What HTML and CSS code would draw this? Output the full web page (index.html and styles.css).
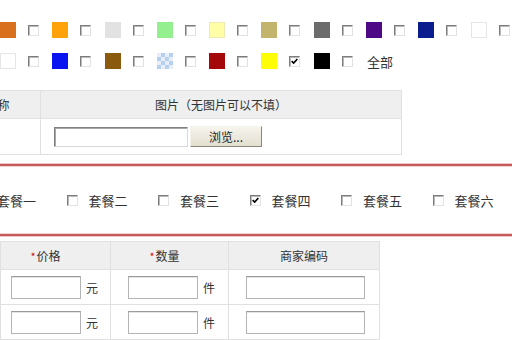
FILE: index.html
```html
<!DOCTYPE html>
<html lang="zh-CN">
   <head>
      <meta charset="UTF-8">
      <meta name="viewport" content="width=device-width, initial-scale=1.0">
      <title>商品规格</title>
      <link rel="stylesheet" href="styles.css">
   </head>
   <body>
      <div class="page">
         <div class="colors">
            <div class="color-row">
               <span class="swatch c-chocolate"></span><span class="cb"></span>
               <span class="swatch c-orange"></span><span class="cb"></span>
               <span class="swatch c-silver"></span><span class="cb"></span>
               <span class="swatch c-green"></span><span class="cb"></span>
               <span class="swatch c-cream"></span><span class="cb"></span>
               <span class="swatch c-khaki"></span><span class="cb"></span>
               <span class="swatch c-gray"></span><span class="cb"></span>
               <span class="swatch c-purple"></span><span class="cb"></span>
               <span class="swatch c-navy"></span><span class="cb"></span>
               <span class="swatch c-white"></span><span class="cb"></span>
            </div>
            <div class="color-row second">
               <span class="swatch c-white"></span><span class="cb"></span>
               <span class="swatch c-blue"></span><span class="cb"></span>
               <span class="swatch c-brown"></span><span class="cb"></span>
               <span class="swatch c-pattern"></span><span class="cb"></span>
               <span class="swatch c-red"></span><span class="cb"></span>
               <span class="swatch c-yellow"></span><span class="cb checked"><svg viewBox="0 0 11 11"><path d="M2 5 L4.5 7.5 L9 2.5" fill="none" stroke="#000" stroke-width="2"/></svg></span>
               <span class="swatch c-black"></span><span class="cb"></span>
               <span class="all-label">全部</span>
            </div>
         </div>

         <table class="pic-table">
            <colgroup><col class="w-name"><col class="w-pic"></colgroup>
            <tr class="head">
               <td>名称</td>
               <td>图片（无图片可以不填）</td>
            </tr>
            <tr class="body-row">
               <td></td>
               <td class="file-cell">
                  <div class="file-box">
                     <span class="file-input"></span>
                     <span class="browse-btn">浏览...</span>
                  </div>
               </td>
            </tr>
         </table>

         <div class="meal-box">
            <div class="meal-row">
               <span class="meal"><span class="cb"></span><span class="meal-text">套餐一</span></span>
               <span class="meal"><span class="cb"></span><span class="meal-text">套餐二</span></span>
               <span class="meal"><span class="cb"></span><span class="meal-text">套餐三</span></span>
               <span class="meal"><span class="cb checked"><svg viewBox="0 0 11 11"><path d="M2 5 L4.5 7.5 L9 2.5" fill="none" stroke="#000" stroke-width="2"/></svg></span><span class="meal-text">套餐四</span></span>
               <span class="meal"><span class="cb"></span><span class="meal-text">套餐五</span></span>
               <span class="meal"><span class="cb"></span><span class="meal-text">套餐六</span></span>
            </div>
         </div>

         <table class="sku-table">
            <colgroup><col class="w1"><col class="w2"><col class="w3"><col class="w4"></colgroup>
            <tr class="head">
               <td></td>
               <td class="shift-big"><span class="star">*</span>价格</td>
               <td class="shift-small"><span class="star">*</span>数量</td>
               <td>商家编码</td>
            </tr>
            <tr class="sku-row">
               <td></td>
               <td class="pad-a"><span class="text-input short"></span><span class="unit">元</span></td>
               <td class="pad-b"><span class="text-input short"></span><span class="unit">件</span></td>
               <td class="pad-b"><span class="text-input long"></span></td>
            </tr>
            <tr class="sku-row">
               <td></td>
               <td class="pad-a"><span class="text-input short"></span><span class="unit">元</span></td>
               <td class="pad-b"><span class="text-input short"></span><span class="unit">件</span></td>
               <td class="pad-b"><span class="text-input long"></span></td>
            </tr>
         </table>
      </div>
   </body>
</html>
```

FILE: styles.css
```css
body{
margin: 0;
background: #fff;
overflow: hidden;
font-family: "Noto Sans CJK SC", "Liberation Sans", sans-serif;
font-size: 12px;
color: #333;
}
.page{
width: 512px;
height: 340px;
overflow: hidden;
}
.colors{
padding-top: 22px;
}
.color-row{
display: flex;
align-items: center;
height: 16px;
}
.color-row.second{
margin-top: 15px;
}
.swatch{
flex: none;
width: 16px;
height: 16px;
margin-right: 12px;
box-sizing: border-box;
}
.cb{
flex: none;
display: inline-block;
width: 11px;
height: 11px;
box-sizing: border-box;
border: 1px solid;
border-color: #7c7c7c #e2e2e2 #e2e2e2 #7c7c7c;
box-shadow: inset 1px 1px 0 #b8b8b8;
background: #fff;
position: relative;
}
.color-row .cb{
margin-right: 13.3px;
}
.cb svg{
position: absolute;
left: 0;
top: 0;
width: 9px;
height: 9px;
}
.c-chocolate{ background: #d8701e; }
.c-orange{ background: #ffa20a; }
.c-silver{ background: #e2e2e2; }
.c-green{ background: #94f08e; }
.c-cream{ background: #fffea6; border: 1px solid #eeeab0; }
.c-khaki{ background: #c2b46c; }
.c-gray{ background: #6c6c6c; }
.c-purple{ background: #4e0a86; }
.c-navy{ background: #0a1c8e; }
.c-white{ background: #fff; border: 1px solid #e6e6e6; }
.c-blue{ background: #0a14f0; }
.c-brown{ background: #8a5a0e; }
.c-pattern{ background: repeating-conic-gradient(#b8d0f0 0 25%, #e8eef8 0 50%); background-size: 8px 8px; }
.c-red{ background: #a40808; }
.c-yellow{ background: #fdfd08; }
.c-black{ background: #000; }
.all-label{
font-size: 13px;
color: #333;
margin-left: 1px;
}

.pic-table{
margin-top: 21px;
margin-left: -46px;
width: 447px;
table-layout: fixed;
border-collapse: collapse;
}
.w-name{ width: 86px; }
.w-pic{ width: 361px; }
.pic-table td{
border: 1px solid #e0e0e0;
padding: 0;
}
.head td{
background: #efefef;
height: 27px;
text-align: center;
}
.body-row td{
height: 35px;
}
.pic-table .file-cell{
padding-left: 13px;
}
.file-box{
display: flex;
align-items: center;
}
.file-input{
width: 134px;
height: 20px;
box-sizing: border-box;
border: 1px solid;
border-color: #808080 #d8d8d8 #d8d8d8 #808080;
box-shadow: inset 1px 1px 0 #a8a8a8;
background: #fff;
}
.browse-btn{
width: 72px;
height: 21px;
margin-left: 2px;
box-sizing: border-box;
border: 1px solid;
border-color: #f4f2ea #8a8878 #8a8878 #f4f2ea;
background: linear-gradient(#f6f4ec, #e2dfd0);
font-size: 12px;
line-height: 19px;
text-align: center;
color: #222;
}

.meal-box{
margin-top: 9px;
margin-left: -10px;
width: 540px;
height: 68px;
border-top: 2px solid #c45a5a;
border-bottom: 2px solid #c45a5a;
box-shadow: 0 -1px 0 #f0c4c4, 0 1px 0 #f0c4c4, inset 0 1px 0 #f4d4d4, inset 0 -1px 0 #f4d4d4;
display: flex;
align-items: center;
}
.meal-row{
display: flex;
align-items: center;
margin-left: -15px;
}
.meal{
display: flex;
align-items: center;
margin-right: 30.5px;
}
.meal .cb{
margin-right: 11px;
}
.meal-text{
width: 39px;
font-size: 13px;
color: #333;
}

.sku-table{
margin-top: 5px;
margin-left: -50px;
width: 429px;
table-layout: fixed;
border-collapse: collapse;
}
.w1{ width: 50px; }
.w2{ width: 110px; }
.w3{ width: 118px; }
.w4{ width: 151px; }
.sku-table td{
border: 1px solid #e0e0e0;
padding: 0;
}
.sku-table .shift-big{
padding-right: 20px;
}
.sku-table .shift-small{
padding-right: 10px;
}
.star{
color: #d01010;
font-size: 11px;
margin-right: 1px;
}
.sku-row td{
height: 34px;
}
.sku-table .pad-a{
padding-left: 10px;
}
.sku-table .pad-b{
padding-left: 17px;
}
.sku-row td > span{
vertical-align: middle;
}
.text-input{
display: inline-block;
height: 23px;
box-sizing: border-box;
border: 1px solid #b4b4b4;
border-top-color: #9a9a9a;
box-shadow: inset 0 1px 0 #e4e4e4;
background: #fff;
}
.text-input.short{
width: 70px;
}
.text-input.long{
width: 119px;
}
.unit{
margin-left: 5px;
font-size: 12px;
}
```
